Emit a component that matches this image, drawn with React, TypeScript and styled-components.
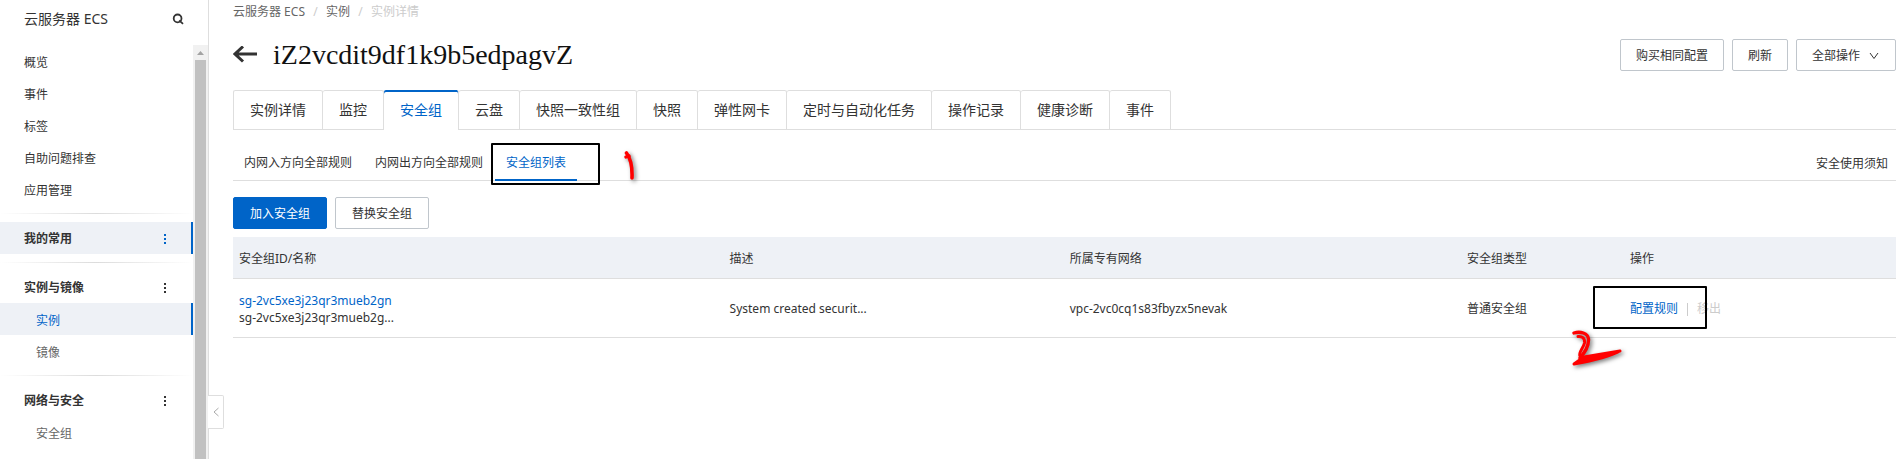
import React from "react";
import styled, { createGlobalStyle, css } from "styled-components";

const blue = "#0064c8";
const text = "#333";
const line = "#dedede";
const band = "#eef1f6";

const GlobalStyle = createGlobalStyle`
  * { box-sizing: border-box; }
  body {
    margin: 0;
    background: #fff;
    color: ${text};
    font: 12px/16px "Noto Sans", "Noto Sans CJK SC", sans-serif;
    overflow: hidden;
  }
  button { font: inherit; color: inherit; cursor: pointer; }
  a { color: inherit; text-decoration: none; }
`;

const Page = styled.div`
  display: flex;
  height: 100vh;
`;

/* ---------- sidebar ---------- */

const Sidebar = styled.aside`
  position: relative;
  display: flex;
  flex-direction: column;
  flex: 0 0 209px;
  border-right: 1px solid ${line};
`;

const SidebarHead = styled.header`
  display: flex;
  align-items: center;
  justify-content: space-between;
  flex: 0 0 45px;
  padding: 0 24px 7px;
  font-size: 14px;
`;

const IconButton = styled.button<{ $active?: boolean }>`
  display: flex;
  padding: 0;
  border: 0;
  background: none;
  color: ${(p) => (p.$active ? blue : text)};
`;

const SidebarBody = styled.div`
  display: flex;
  flex: 1;
  min-height: 0;
`;

const Nav = styled.nav`
  flex: 1;
  overflow: hidden;
`;

const activeItem = css`
  background: ${band};
  border-right: 2px solid ${blue};
`;

const NavLink = styled.a<{ $active?: boolean; $child?: boolean }>`
  display: flex;
  align-items: center;
  height: 32px;
  padding: 3px 0 0 ${(p) => (p.$child ? 36 : 24)}px;
  color: ${(p) => (p.$active ? blue : p.$child ? "#666" : text)};
  ${(p) => p.$active && activeItem}
`;

const NavGroup = styled.div<{ $active?: boolean }>`
  display: flex;
  align-items: center;
  justify-content: space-between;
  height: 32px;
  padding: 2px ${(p) => (p.$active ? 24 : 26)}px 0 24px;
  font-weight: 700;
  ${(p) => p.$active && activeItem}
`;

const Divider = styled.hr`
  height: 1px;
  margin: 8px 0;
  border: 0;
  background: linear-gradient(to right, #fff, #dcdcdc 50%, #fff);
`;

const Scrollbar = styled.div`
  display: flex;
  flex-direction: column;
  align-items: center;
  flex: 0 0 15px;
  background: #f1f1f1;
`;

const ScrollArrow = styled.svg`
  flex: 0 0 15px;
`;

const Thumb = styled.div`
  flex: 1;
  width: 11px;
  background: #c1c1c1;
`;

const CollapseButton = styled.button`
  position: absolute;
  left: 100%;
  bottom: 30px;
  display: flex;
  align-items: center;
  justify-content: center;
  width: 16px;
  height: 34px;
  padding: 0;
  border: 1px solid ${line};
  border-left: 0;
  border-radius: 0 2px 2px 0;
  background: #fff;
  color: #aaa;
`;

/* ---------- main ---------- */

const Main = styled.main`
  flex: 1;
  min-width: 0;
  padding: 0 8px 0 24px;
`;

const Breadcrumb = styled.nav`
  display: flex;
  align-items: center;
  height: 24px;
  color: #666;
`;

const Slash = styled.span`
  width: 21px;
  text-align: center;
  color: #ccc;
`;

const Current = styled.span`
  color: #ccc;
`;

const TitleRow = styled.div`
  display: flex;
  align-items: center;
  gap: 8px;
  height: 32px;
  margin: 15px 0 19px;
`;

const Title = styled.h1`
  flex: 1;
  margin: 0 0 0 8px;
  color: #111;
  font: 28px/32px "Liberation Serif", serif;
`;

const Button = styled.button<{ $primary?: boolean; $wide?: boolean }>`
  display: flex;
  align-items: center;
  gap: 8px;
  height: 32px;
  padding: 2px ${(p) => (p.$wide ? 16 : 15)}px 0;
  border: 1px solid ${(p) => (p.$primary ? blue : "#c0c6cc")};
  border-radius: 2px;
  background: ${(p) => (p.$primary ? blue : "#fff")};
  color: ${(p) => (p.$primary ? "#fff" : text)};
  white-space: nowrap;
`;

const Tabs = styled.div`
  display: flex;
  height: 40px;
  box-shadow: inset 0 -1px ${line};
`;

const Tab = styled.button<{ $active?: boolean }>`
  padding: 0 16px;
  border: 0;
  border-right: 1px solid ${line};
  border-radius: 2px 2px 0 0;
  background: ${(p) => (p.$active ? "#fff" : "none")};
  box-shadow: ${(p) => (p.$active ? `inset 0 2px ${blue}` : `inset 0 1px ${line}`)};
  color: ${(p) => (p.$active ? blue : text)};
  font-size: 14px;
  white-space: nowrap;
  &:first-child {
    border-left: 1px solid ${line};
  }
`;

const SubTabs = styled.div`
  display: flex;
  gap: 1px;
  height: 34px;
  margin: 17px 0 16px;
  box-shadow: inset 0 -1px ${line};
`;

const SubTab = styled.button<{ $active?: boolean }>`
  position: relative;
  padding: 0 11px 2px;
  border: 0;
  background: none;
  box-shadow: ${(p) => (p.$active ? `inset 0 -2px ${blue}` : "none")};
  color: ${(p) => (p.$active ? blue : text)};
  white-space: nowrap;
`;

const Notice = styled.a`
  align-self: center;
  margin: 0 8px 0 auto;
`;

const Toolbar = styled.div`
  display: flex;
  gap: 8px;
  margin-bottom: 8px;
`;

const Table = styled.table`
  width: 100%;
  table-layout: fixed;
  border-collapse: separate;
  border-spacing: 0;
  text-align: left;
`;

const Column = styled.col<{ $share?: number }>`
  width: ${(p) => (p.$share ? `${p.$share}%` : "auto")};
`;

const HeadCell = styled.th`
  height: 42px;
  padding: 2px 6px 0;
  border-bottom: 1px solid ${line};
  background: ${band};
  font-weight: 400;
`;

const Cell = styled.td`
  position: relative;
  height: 59px;
  padding: 2px 6px 0;
  border-bottom: 1px solid ${line};
`;

const Lines = styled.div`
  display: flex;
  flex-direction: column;
  align-items: flex-start;
  line-height: 17px;
`;

const Link = styled.a`
  color: ${blue};
`;

const Actions = styled.div`
  display: flex;
  align-items: center;
  gap: 9px;
`;

const Bar = styled.span`
  width: 1px;
  height: 13px;
  background: #ccc;
`;

const PlainButton = styled.button`
  padding: 0;
  border: 0;
  background: none;
  &:disabled { color: #ccc; }
`;

/* ---------- annotations laid over the page ---------- */

const Frame = styled.span<{ $left: number; $top: number; $w: number; $h: number }>`
  position: absolute;
  left: ${(p) => p.$left}px;
  top: ${(p) => p.$top}px;
  width: ${(p) => p.$w}px;
  height: ${(p) => p.$h}px;
  border: 2px solid #000;
  border-radius: 1px;
  pointer-events: none;
`;

const Scribble = styled.svg<{ $left: number; $top: number }>`
  position: absolute;
  left: ${(p) => p.$left}px;
  top: ${(p) => p.$top}px;
  z-index: 1;
  overflow: visible;
  pointer-events: none;
  fill: none;
  stroke: #f00;
  stroke-linecap: round;
  stroke-linejoin: round;
  filter: drop-shadow(2px 2px 2px rgba(0, 0, 0, 0.5));
`;

const More = ({ label, active }: { label: string; active?: boolean }) => (
  <IconButton aria-label={label} $active={active}>
    <svg width="4" height="12" viewBox="0 0 4 12" fill="currentColor">
      <rect x="1" y="1" width="2" height="2" />
      <rect x="1" y="5" width="2" height="2" />
      <rect x="1" y="9" width="2" height="2" />
    </svg>
  </IconButton>
);

const topLinks = ["概览", "事件", "标签", "自助问题排查", "应用管理"];
const tabs = ["实例详情", "监控", "安全组", "云盘", "快照一致性组", "快照", "弹性网卡", "定时与自动化任务", "操作记录", "健康诊断", "事件"];

export default function App() {
  return (
    <Page>
      <GlobalStyle />
      <Sidebar>
        <SidebarHead>
          <span>云服务器 ECS</span>
          <IconButton aria-label="搜索">
            <svg width="12" height="12" viewBox="0 0 12 12" fill="none" stroke="currentColor" strokeWidth="1.8">
              <circle cx="5.6" cy="5.4" r="3.9" />
              <path d="M7.2 7.4 L11 10.8" />
            </svg>
          </IconButton>
        </SidebarHead>
        <SidebarBody>
          <Nav>
            {topLinks.map((name) => (
              <NavLink href="#" key={name}>{name}</NavLink>
            ))}
            <Divider />
            <NavGroup $active>
              我的常用
              <More label="我的常用" active />
            </NavGroup>
            <Divider />
            <NavGroup>
              实例与镜像
              <More label="实例与镜像" />
            </NavGroup>
            <NavLink href="#" $child $active>实例</NavLink>
            <NavLink href="#" $child>镜像</NavLink>
            <Divider />
            <NavGroup>
              网络与安全
              <More label="网络与安全" />
            </NavGroup>
            <NavLink href="#" $child>安全组</NavLink>
          </Nav>
          <Scrollbar aria-hidden="true">
            <ScrollArrow width="15" height="15" viewBox="0 0 15 15" fill="#a3a3a3">
              <path d="M4 10 L7.5 6 L11 10 Z" />
            </ScrollArrow>
            <Thumb />
          </Scrollbar>
        </SidebarBody>
        <CollapseButton aria-label="收起">
          <svg width="6" height="10" viewBox="0 0 6 10" fill="none" stroke="currentColor">
            <path d="M5.5 1 L1 5 L5.5 9" />
          </svg>
        </CollapseButton>
      </Sidebar>

      <Main>
        <Breadcrumb>
          <a href="#">云服务器 ECS</a>
          <Slash>/</Slash>
          <a href="#">实例</a>
          <Slash>/</Slash>
          <Current>实例详情</Current>
        </Breadcrumb>

        <TitleRow>
          <IconButton aria-label="返回">
            <svg width="24" height="18" viewBox="0 0 24 18" fill="none" stroke="currentColor" strokeWidth="3">
              <path d="M1.5 8 H24 M10 0.5 L2 8 L10 15.5" />
            </svg>
          </IconButton>
          <Title>iZ2vcdit9df1k9b5edpagvZ</Title>
          <Button>购买相同配置</Button>
          <Button>刷新</Button>
          <Button>
            全部操作
            <svg width="12" height="8" viewBox="0 0 12 8" fill="none" stroke="currentColor">
              <path d="M2 1 L6 6.5 L10 1" />
            </svg>
          </Button>
        </TitleRow>

        <Tabs role="tablist">
          {tabs.map((name) => (
            <Tab key={name} role="tab" $active={name === "安全组"} aria-selected={name === "安全组"}>
              {name}
            </Tab>
          ))}
        </Tabs>

        <SubTabs role="tablist">
          <SubTab role="tab">内网入方向全部规则</SubTab>
          <SubTab role="tab">内网出方向全部规则</SubTab>
          <SubTab role="tab" $active aria-selected>
            安全组列表
            <Frame $left={-4} $top={-4} $w={109} $h={42} />
            <Scribble $left={128} $top={3} width="14" height="32" viewBox="0 0 14 32">
              <path d="M3.5 3 C8 9 9.5 16 9 28" strokeWidth="3.6" />
              <path d="M3 7 L6 6" strokeWidth="3.4" />
            </Scribble>
          </SubTab>
          <Notice href="#">安全使用须知</Notice>
        </SubTabs>

        <Toolbar>
          <Button $primary $wide>加入安全组</Button>
          <Button $wide>替换安全组</Button>
        </Toolbar>

        <Table>
          <colgroup>
            <Column $share={29.5} />
            <Column $share={20.45} />
            <Column $share={23.9} />
            <Column $share={9.8} />
            <Column />
          </colgroup>
          <thead>
            <tr>
              <HeadCell>安全组ID/名称</HeadCell>
              <HeadCell>描述</HeadCell>
              <HeadCell>所属专有网络</HeadCell>
              <HeadCell>安全组类型</HeadCell>
              <HeadCell>操作</HeadCell>
            </tr>
          </thead>
          <tbody>
            <tr>
              <Cell>
                <Lines>
                  <Link href="#">sg-2vc5xe3j23qr3mueb2gn</Link>
                  <span>sg-2vc5xe3j23qr3mueb2g...</span>
                </Lines>
              </Cell>
              <Cell>System created securit...</Cell>
              <Cell>vpc-2vc0cq1s83fbyzx5nevak</Cell>
              <Cell>普通安全组</Cell>
              <Cell>
                <Actions>
                  <Link href="#">配置规则</Link>
                  <Bar />
                  <PlainButton disabled>移出</PlainButton>
                </Actions>
                <Frame $left={-31} $top={7} $w={114} $h={43} />
                <Scribble $left={-53} $top={50} width="52" height="38" viewBox="0 0 52 38">
                  <path d="M3 4 C9 2 17 4 17.5 10 C18 18 13 24 9 29" strokeWidth="3.4" />
                  <path d="M7 7.5 C11 7 14 9 13.5 14 C12 20 7 24 9 27" strokeWidth="3" />
                  <path d="M3 35 L13 28 L49 22 C38 28 20 32 3 35 Z" strokeWidth="3" fill="#f00" />
                </Scribble>
              </Cell>
            </tr>
          </tbody>
        </Table>
      </Main>
    </Page>
  );
}
